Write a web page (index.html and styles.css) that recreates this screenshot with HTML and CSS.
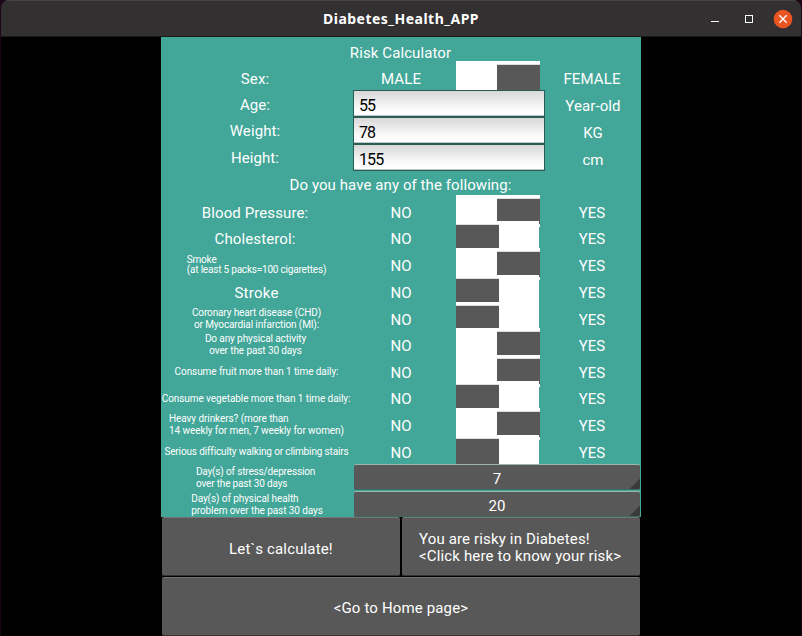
FILE: index.html
```html
<!DOCTYPE html>
<html lang="en">
<head>
<meta charset="utf-8">
<title>Diabetes_Health_APP</title>
<link rel="stylesheet" href="styles.css">
</head>
<body>
<div class="window">
  <header class="titlebar">
    <h1 class="title">Diabetes_Health_APP</h1>
    <div class="controls">
      <svg width="90" height="24" viewBox="0 0 90 24">
        <path d="M4 14.5h8" stroke="#fff"/>
        <rect x="38.5" y="8.5" width="7" height="7" fill="none" stroke="#fff"/>
        <circle cx="76" cy="12" r="9.3" fill="#e95420"/>
        <path d="M72.3 8.3l7.4 7.4M79.7 8.3l-7.4 7.4" stroke="#fff" stroke-width="1.4"/>
      </svg>
    </div>
  </header>
  <main class="app">
    <section class="form">
      <div class="row full"><span>Risk Calculator</span></div>
      <div class="row"><span>Sex:</span><span>MALE</span><i class="switch on"><b></b></i><span>FEMALE</span></div>
      <div class="row field"><span class="up">Age:</span><div class="input">55</div><span>Year-old</span></div>
      <div class="row field"><span class="up">Weight:</span><div class="input">78</div><span>KG</span></div>
      <div class="row field"><span class="up">Height:</span><div class="input">155</div><span>cm</span></div>
      <div class="row full"><span class="question">Do you have any of the following:</span></div>
      <div class="row"><span>Blood Pressure:</span><span>NO</span><i class="switch on"><b></b></i><span>YES</span></div>
      <div class="row"><span>Cholesterol:</span><span>NO</span><i class="switch"><b></b></i><span>YES</span></div>
      <div class="row"><span class="small smoke">Smoke<br>(at least 5 packs=100 cigarettes)</span><span>NO</span><i class="switch on"><b></b></i><span>YES</span></div>
      <div class="row"><span class="stroke">Stroke</span><span>NO</span><i class="switch"><b></b></i><span>YES</span></div>
      <div class="row"><span class="small mid heart">Coronary heart disease (CHD)<br>or Myocardial infarction (MI):</span><span>NO</span><i class="switch"><b></b></i><span>YES</span></div>
      <div class="row"><span class="small mid activity">Do any physical activity<br>over the past 30 days</span><span>NO</span><i class="switch on"><b></b></i><span>YES</span></div>
      <div class="row"><span class="small">Consume fruit more than 1 time daily:</span><span>NO</span><i class="switch on"><b></b></i><span>YES</span></div>
      <div class="row"><span class="small vegetable">Consume vegetable more than 1 time daily:</span><span>NO</span><i class="switch"><b></b></i><span>YES</span></div>
      <div class="row"><span class="small">Heavy drinkers? (more than<br>14 weekly for men, 7 weekly for women)</span><span>NO</span><i class="switch on"><b></b></i><span>YES</span></div>
      <div class="row"><span class="small stairs">Serious difficulty walking or climbing stairs</span><span>NO</span><i class="switch"><b></b></i><span>YES</span></div>
      <div class="row pick"><span class="small stress">Day(s) of stress/depression<br>over the past 30 days</span><div class="spinner">7</div></div>
      <div class="row pick"><span class="small">Day(s) of physical health<br>problem over the past 30 days</span><div class="spinner">20</div></div>
    </section>
    <div class="actions">
      <button class="btn">Let`s calculate!</button>
      <button class="btn">You are risky in Diabetes!<br>&lt;Click here to know your risk&gt;</button>
    </div>
    <button class="btn home">&lt;Go to Home page&gt;</button>
  </main>
</div>
</body>
</html>
```

FILE: styles.css
```css
* { box-sizing: border-box; }

body {
  margin: 0;
  background: #1d0518;
  font: 15px/17px Roboto, sans-serif;
  color: #fff;
}

.window {
  width: 800px;
  height: 636px;
  margin-left: 1px;
  overflow: hidden;
  background: #000;
  border-radius: 8px 8px 0 0;
}

.titlebar {
  display: grid;
  grid-template-columns: 96px 1fr 96px;
  align-items: center;
  height: 37px;
  background: #333031;
  border-top: 1px solid #474546;
  border-bottom: 1px solid #1c1b1b;
}

.title {
  grid-column: 2;
  margin: 0;
  text-align: center;
  font: bold 14px/20px "Noto Sans", sans-serif;
  letter-spacing: 0.48px;
}

.controls svg { display: block; margin-left: 2px; }

.app { width: 480px; margin-left: 160px; }

.form {
  display: grid;
  grid-template-rows: repeat(18, 1fr);
  height: 480px;
  background: #42a698;
}

.row {
  display: grid;
  grid-template-columns: 188px 104px 89px 100px;
  align-items: center;
  justify-items: center;
  min-height: 0;
  height: 26.667px;
}

.row > span { padding-top: 5.9px; letter-spacing: 0.1px; }
.row > .up { padding-top: 3px; }
.row > .question { padding-top: 4px; letter-spacing: 0.08px; }
.row.full { grid-template-columns: 479px; }
.row.field { grid-template-columns: 188px 200px 88px; }
.row.pick { grid-template-columns: 192px 288px; }

.row > .small {
  padding: 3px 0 0 3px;
  font-size: 10px;
  line-height: 12px;
  letter-spacing: -0.08px;
  white-space: nowrap;
}
.row > .mid { text-align: center; }
.row > .smoke { padding-top: 2px; line-height: 10px; letter-spacing: -0.2px; }
.row > .heart { letter-spacing: -0.12px; }
.row > .activity { padding-left: 1px; letter-spacing: -0.1px; }
.row > .vegetable { padding: 4px 0 0 2px; }
.row > .stairs { letter-spacing: -0.14px; }
.row > .stroke { letter-spacing: 0.25px; padding-left: 3px; }
.row.pick > .small { padding: 2px 0 0; }
.row.pick > .stress { padding-right: 3px; letter-spacing: -0.16px; }

.switch {
  display: flex;
  width: 83px;
  height: 32px;
  margin: -2.3px 0 -3.3px;
  background: #fff;
}

.switch b {
  flex: none;
  width: 43px;
  height: 32px;
  background: #fff linear-gradient(#ddd 1px, #585858 1px) 0 3px / 100% 26px no-repeat;
}
.switch.on b { margin-left: 41px; }

.input {
  position: relative;
  width: 192px;
  height: 27px;
  padding: 6px 5px 0;
  border: 1px solid #285c54;
  background: linear-gradient(#d8d8d8, #fafafa 70%, #fff 94%, #bcc8c6 96%);
  color: #000;
  font-size: 16px;
  letter-spacing: -0.9px;
}

.spinner {
  position: relative;
  width: 286px;
  height: 26px;
  padding-top: 6px;
  border-top: 1px solid #9ab8b2;
  border-bottom: 1px solid #386a63;
  border-radius: 2px;
  background: linear-gradient(135deg, transparent 50%, #3a3a3a 50%) right bottom / 11px 10px no-repeat, #585858;
  text-align: center;
}

.actions { display: grid; grid-template-columns: 1fr 1fr; }

.btn {
  height: 59px;
  margin: 0 1px 1px;
  padding: 5px 0 0;
  border: 0;
  border-top: 1px solid #757575;
  border-bottom: 1px solid #343434;
  border-radius: 2px;
  background: #585858;
  color: #fff;
  font: 15px/17px Roboto, sans-serif;
  letter-spacing: 0.15px;
}
.actions .btn:last-child { padding: 2px 0 0 17px; text-align: left; }
.home { display: block; width: 478px; padding-top: 3px; }
```
